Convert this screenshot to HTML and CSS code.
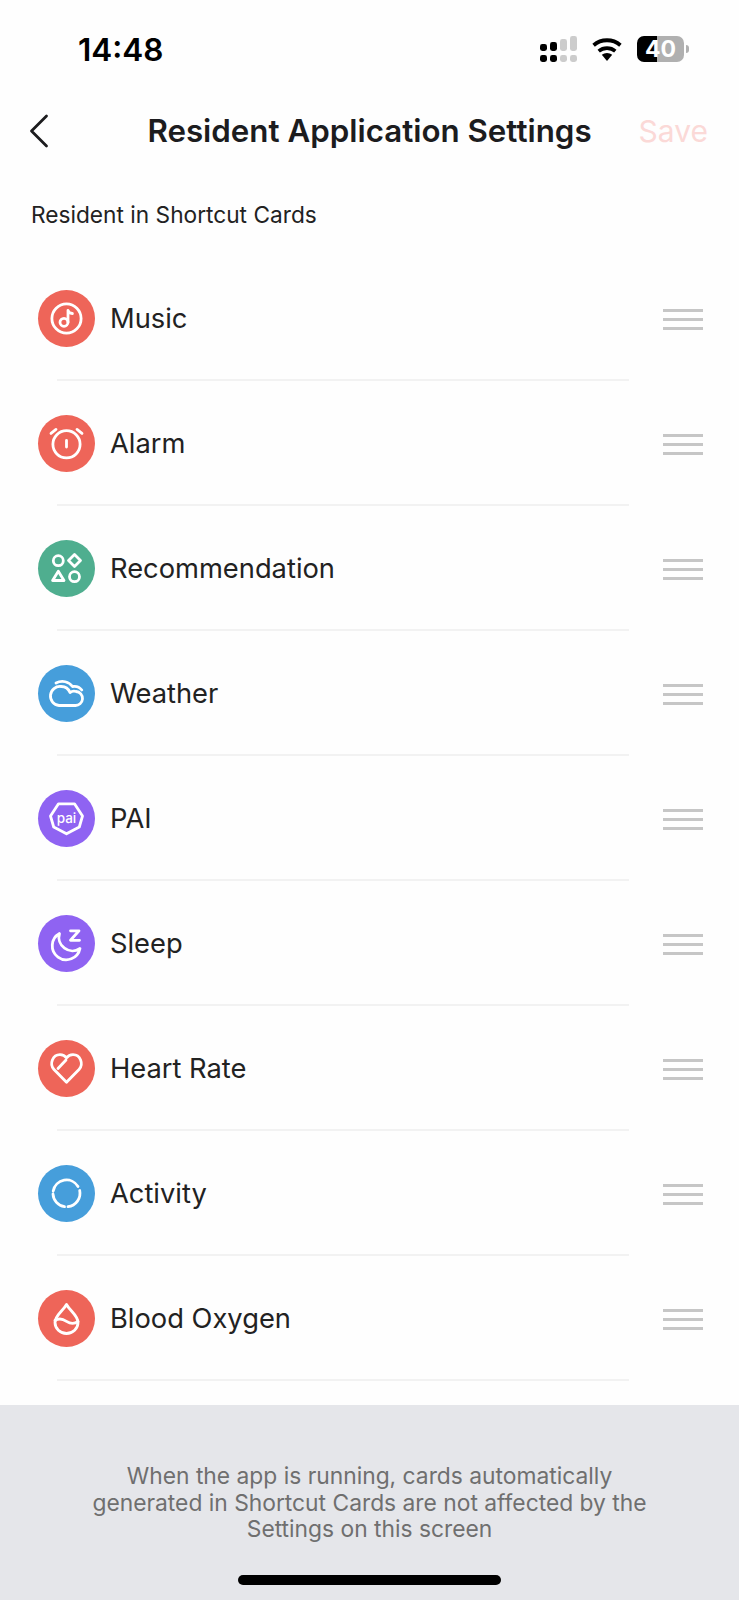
FILE: index.html
```html
<!DOCTYPE html>
<html lang="en">
<head>
<meta charset="utf-8">
<title>Resident Application Settings</title>
<link rel="stylesheet" href="styles.css">
</head>
<body>
<div class="screen">
  <div class="status">
    <span class="time">14:48</span>
    <div class="status-icons">
      <svg class="signal" width="37" height="26" viewBox="0 0 37 26">
        <rect x="0" y="8" width="7" height="7" rx="2.400" fill="#000"/><rect x="10" y="6" width="7" height="9" rx="2.400" fill="#000"/>
        <rect x="20" y="3" width="7" height="12" rx="2.400" fill="#ccc"/><rect x="30" y="0" width="7" height="15" rx="2.400" fill="#ccc"/>
        <rect x="0" y="19" width="7" height="7" rx="2.400" fill="#000"/><rect x="10" y="19" width="7" height="7" rx="2.400" fill="#000"/>
        <rect x="20" y="19" width="7" height="7" rx="2.400" fill="#ccc"/><rect x="30" y="19" width="7" height="7" rx="2.400" fill="#ccc"/>
      </svg>
      <svg class="wifi" width="32" height="24" viewBox="0 0 32 24">
        <path d="M16 24l-5.200-6.200a8 8 0 0 1 10.400 0z" fill="#000"/>
        <path d="M7.700 14.200a12.800 12.800 0 0 1 16.600 0" fill="none" stroke="#000" stroke-width="3.600"/>
        <path d="M2.600 8.200a20.600 20.600 0 0 1 26.800 0" fill="none" stroke="#000" stroke-width="3.800"/>
      </svg>
      <div class="battery"><span>40</span></div>
      <span class="nub"></span>
    </div>
  </div>

  <header class="nav">
    <svg class="back" width="20" height="34" viewBox="0 0 20 34"><path d="M17.500 2L2.500 17l15 15" fill="none" stroke="#1c1c1e" stroke-width="2.800" stroke-linecap="round" stroke-linejoin="round"/></svg>
    <h1 class="title">Resident Application Settings</h1>
    <span class="save">Save</span>
  </header>

  <p class="section">Resident in Shortcut Cards</p>

  <ul class="list">
    <li class="row">
      <div class="row-main">
        <svg class="icon red" viewBox="0 0 57 57"><circle cx="28.500" cy="28.500" r="14.600"/><circle cx="26" cy="32.300" r="4"/><path d="M30 32.300V20.300c.4 2 2.200 3 4.400 3.200"/></svg>
        <span class="label">Music</span>
        <span class="handle"><i></i><i></i><i></i></span>
      </div>
      <div class="sep"></div>
    </li>
    <li class="row">
      <div class="row-main">
        <svg class="icon red" viewBox="0 0 57 57"><circle cx="28.500" cy="29.300" r="13.600"/><path d="M28.500 25.500v6.500M13 18.400l5-4M44 18.400l-5-4"/></svg>
        <span class="label">Alarm</span>
        <span class="handle"><i></i><i></i><i></i></span>
      </div>
      <div class="sep"></div>
    </li>
    <li class="row">
      <div class="row-main">
        <svg class="icon green" viewBox="0 0 57 57"><circle cx="20.300" cy="20.700" r="5"/><path d="M36.500 14.600l6 6-6 6-6-6z"/><path d="M20.300 31.200l5.700 9.300H14.600z"/><circle cx="36.500" cy="36.700" r="5"/></svg>
        <span class="label">Recommendation</span>
        <span class="handle"><i></i><i></i><i></i></span>
      </div>
      <div class="sep"></div>
    </li>
    <li class="row">
      <div class="row-main">
        <svg class="icon blue" viewBox="0 0 57 57"><path d="M21 40.500h16a7 7 0 0 0 1-14 7 7 0 0 0-6 1A9.500 9.500 0 0 0 23 21.500 9.500 9.500 0 0 0 21 40.500z"/><path d="M18 18c6-3 13-1.500 16.500 3.500 3.500-.6 7 .5 9.300 3.500"/></svg>
        <span class="label">Weather</span>
        <span class="handle"><i></i><i></i><i></i></span>
      </div>
      <div class="sep"></div>
    </li>
    <li class="row">
      <div class="row-main">
        <span class="badge">
          <svg class="icon purple" viewBox="0 0 57 57"><path d="M20.500 13.800h16l8 12.200-3.200 11-12.800 6.800-12.800-6.800-3.200-11z"/></svg>
          <span class="pai">pai</span>
        </span>
        <span class="label">PAI</span>
        <span class="handle"><i></i><i></i><i></i></span>
      </div>
      <div class="sep"></div>
    </li>
    <li class="row">
      <div class="row-main">
        <svg class="icon purple" viewBox="0 0 57 57"><path d="M21.500 18.500A14 14 0 1 0 42 33.500 13.500 13.500 0 0 1 21.500 18.500z"/><path d="M32.500 15.800h8.500l-8.500 9.500h9"/></svg>
        <span class="label">Sleep</span>
        <span class="handle"><i></i><i></i><i></i></span>
      </div>
      <div class="sep"></div>
    </li>
    <li class="row">
      <div class="row-main">
        <svg class="icon red" viewBox="0 0 57 57"><path d="M28.500 42.300L16 29.500c-5-5.500-1.300-14.800 6-14.800 2.800 0 5 1.100 6.500 3.200 1.500-2.100 3.700-3.200 6.500-3.200 7.300 0 11 9.300 6 14.800z"/><path d="M20 28.500l8-8.500"/></svg>
        <span class="label">Heart Rate</span>
        <span class="handle"><i></i><i></i><i></i></span>
      </div>
      <div class="sep"></div>
    </li>
    <li class="row">
      <div class="row-main">
        <svg class="icon blue" viewBox="0 0 57 57"><path d="M15.200 26A13.500 13.500 0 0 1 40 21.500M41.700 25.500A13.500 13.500 0 0 1 30 41.700M26.500 41.700A13.500 13.500 0 0 1 15 29"/></svg>
        <span class="label">Activity</span>
        <span class="handle"><i></i><i></i><i></i></span>
      </div>
      <div class="sep"></div>
    </li>
    <li class="row">
      <div class="row-main">
        <svg class="icon red" viewBox="0 0 57 57"><path d="M28.500 14.500c-3.500 6.500-11.500 11-11.500 18a11.500 11 0 0 0 23 0c0-7-8-11.500-11.500-18z"/><path d="M17 30.500c4.500-3 8-1.500 11.500 .8 3.500 2.300 7.500 3 11.500 .2"/></svg>
        <span class="label">Blood Oxygen</span>
        <span class="handle"><i></i><i></i><i></i></span>
      </div>
      <div class="sep"></div>
    </li>
  </ul>

  <footer class="footer">
    <p class="note">When the app is running, cards automatically generated in Shortcut Cards are not affected by the Settings on this screen</p>
    <div class="home"></div>
  </footer>
</div>
</body>
</html>
```

FILE: styles.css
```css
* { box-sizing: border-box; }
html, body { margin: 0; padding: 0; }
body { background: #fefefe; font-family: Inter, "Liberation Sans", sans-serif; color: #1f1f1f; }
.screen { width: 739px; height: 1600px; display: flex; flex-direction: column; overflow: hidden; }

.status { height: 98px; padding: 36px 50px 0 78px; display: flex; justify-content: space-between; align-items: flex-start; }
.time { font-size: 31.500px; font-weight: 600; line-height: 28px; color: #000; }
.status-icons { display: flex; align-items: flex-start; }
.signal { margin: 0 14px 0 5px; display: block; }
.wifi { margin: 1px 14px 0 0; display: block; }
.battery { width: 47px; height: 26px; border-radius: 7px; background: linear-gradient(90deg, #000 0 20px, #b0b0b0 20px); color: #fff; font-size: 23px; font-weight: 700; line-height: 26px; text-align: center; }
.nub { width: 3px; height: 8px; margin: 9px 0 0 2px; background: #b0b0b0; border-radius: 0 3px 3px 0; }

.nav { height: 66px; padding: 0 31px; display: grid; grid-template-columns: 1fr auto 1fr; align-items: center; }
.back { display: block; margin-left: -2px; }
.title { margin: 0; font-size: 31.300px; font-weight: 600; line-height: 40px; color: #1c1c1e; white-space: nowrap; }
.save { justify-self: end; font-size: 30px; font-weight: 400; line-height: 40px; color: #fbd9d7; }

.section { margin: 0; padding: 37px 31px 0; height: 92px; font-size: 22.700px; line-height: 28px; color: #222; white-space: nowrap; }

.list { list-style: none; margin: 0; padding: 0; }
.row { height: 125px; }
.row-main { height: 123px; padding: 2px 36px 0 38px; display: flex; align-items: center; }
.sep { margin-left: 57px; width: 572px; height: 2px; background: #f2f2f2; }
.icon { width: 57px; height: 57px; border-radius: 50%; display: block; flex: none; fill: none; stroke: #fff; stroke-width: 2.800; stroke-linecap: round; stroke-linejoin: round; }
.red { background: #ee6559; }
.green { background: #4fae8f; }
.blue { background: #469edb; }
.purple { background: #8f63f2; }
.badge { position: relative; width: 57px; height: 57px; flex: none; }
.pai { position: absolute; left: 0; right: 0; top: 18px; text-align: center; font-size: 13.500px; line-height: 20px; font-weight: 500; color: #fff; }
.label { margin: 0 0 0 15px; flex: 1; font-size: 27.300px; line-height: 34px; color: #222; }
.handle { margin-top: 2px; width: 40px; display: flex; flex-direction: column; gap: 6px; }
.handle i { display: block; height: 3px; background: #c6c6c6; }

.footer { margin-top: auto; height: 195px; background: #e5e6ea; padding-top: 58px; display: flex; flex-direction: column; align-items: center; }
.note { margin: 0; width: 580px; text-align: center; font-size: 22.800px; line-height: 26.700px; color: #6f6f6f; }
.home { margin-top: 32px; width: 263px; height: 10px; border-radius: 5px; background: #000; }
```
